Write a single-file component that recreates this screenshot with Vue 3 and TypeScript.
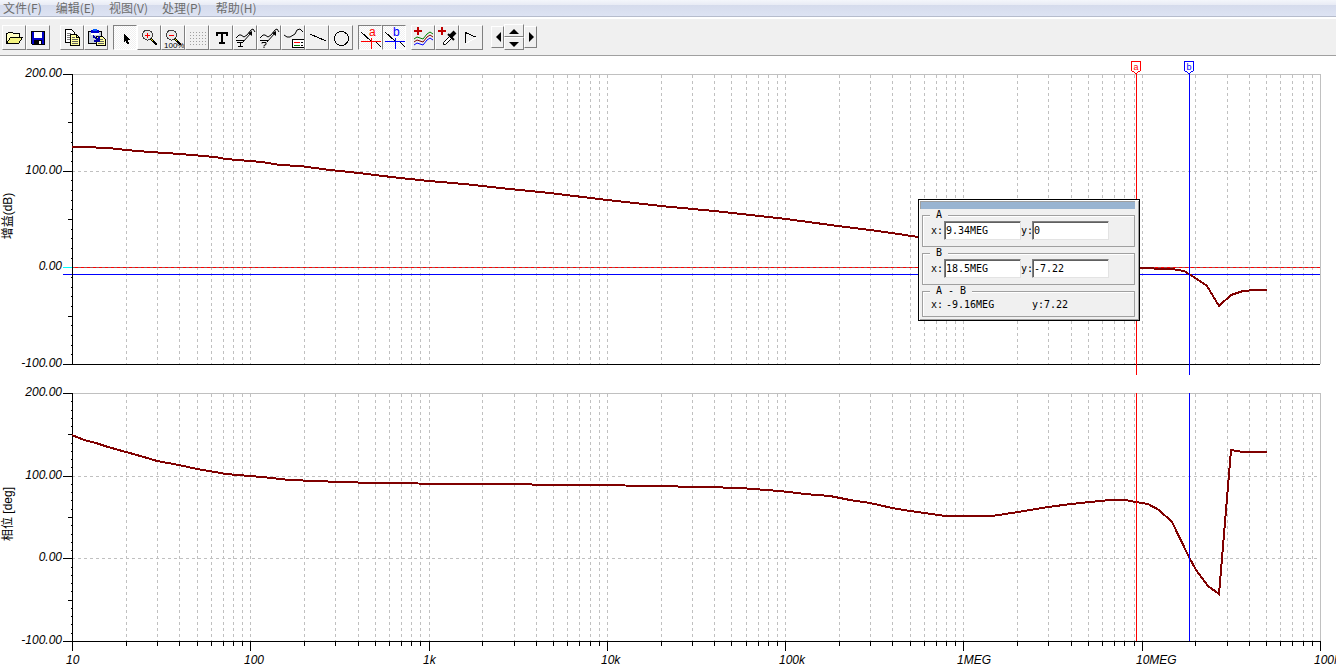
<script setup lang="ts">
import { computed, onBeforeUnmount, onMounted, ref } from 'vue'

type Point = [number, number]

const menus = ['文件(F)', '编辑(E)', '视图(V)', '处理(P)', '帮助(H)']
const toolGroups: { name: string; label: string; pressed?: boolean }[][] = [
  [{ name: 'open', label: '打开' }, { name: 'save', label: '保存' }],
  [{ name: 'copy', label: '复制' }, { name: 'paste', label: '粘贴' }],
  [
    { name: 'pointer', label: '选择', pressed: true },
    { name: 'zoomin', label: '放大' },
    { name: 'zoom100', label: '缩放 100%' },
    { name: 'grid', label: '网格' },
    { name: 'text', label: '文本' },
    { name: 'curvetext', label: '曲线标注' },
    { name: 'curvehelp', label: '曲线查询' },
    { name: 'legend', label: '图例' },
    { name: 'line', label: '直线' },
    { name: 'circle', label: '圆' },
  ],
  [{ name: 'cursora', label: '游标 a', pressed: true }, { name: 'cursorb', label: '游标 b', pressed: true }],
  [{ name: 'addcurve', label: '添加曲线' }, { name: 'probe', label: '探针' }, { name: 'play', label: '处理' }],
]

const gridDots: Point[] = []
for (let y = 7; y <= 19; y += 3) for (let x = 5; x <= 20; x += 3) gridDots.push([x, y])

const chart = ref<HTMLElement | null>(null)
const width = ref(1336)
let observer: ResizeObserver | undefined
onMounted(() => {
  if (!chart.value) return
  width.value = chart.value.clientWidth
  observer = new ResizeObserver(() => {
    if (chart.value) width.value = chart.value.clientWidth
  })
  observer.observe(chart.value)
})
onBeforeUnmount(() => observer?.disconnect())

// Vertical coordinates start at the top of the drawing area (TOP).
const TOP = 56
const LEFT = 72
const DECADES = 7
const BASE = 1248
const right = computed(() => width.value - 16)
const span = computed(() => right.value - LEFT)
const sx = (x: number) => LEFT + ((x - LEFT) * span.value) / BASE
const decadeX = (d: number) => Math.round(LEFT + (span.value * d) / DECADES)

const plots = [
  { top: 74, bottom: 364, title: '增益(dB)', mid: 216 },
  { top: 393, bottom: 641, title: '相位 [deg]', mid: 514 },
]
const yLabels = ['200.00', '100.00', '0.00', '-100.00']
const level = (p: { top: number; bottom: number }, i: number, n: number) =>
  Math.round(p.top + ((p.bottom - p.top) * i) / n)

const xTicks = computed(() => {
  const out: { x: number; major: boolean }[] = []
  for (let d = 0; d < DECADES; d++)
    for (let k = 1; k <= 9; k++) out.push({ x: decadeX(d + Math.log10(k)), major: k === 1 })
  out.push({ x: right.value, major: true })
  return out
})
const xLabels = ['10', '100', '1k', '10k', '100k', '1MEG', '10MEG', '100MEG']

const gain: Point[] = [
  [72, 147], [84, 147], [108, 148], [126, 150], [150, 152], [180, 154], [215, 157], [226, 159], [250, 161],
  [262, 162], [280, 165], [300, 166], [330, 170], [350, 172], [375, 175], [400, 178], [429, 181], [464, 184],
  [500, 188], [550, 193], [607, 200], [661, 206], [714, 211], [786, 219], [838, 226], [870, 230], [892, 233],
  [918, 237], [1000, 252], [1060, 261], [1110, 267], [1142, 268], [1165, 269], [1172, 269], [1184, 271],
  [1189, 274], [1197, 279], [1207, 286], [1219, 306], [1231, 295], [1243, 291], [1255, 290], [1267, 290],
]
const phase: Point[] = [
  [72, 435], [84, 440], [96, 443], [108, 447], [126, 452], [144, 457], [157, 461], [179, 465], [197, 469],
  [215, 472], [226, 474], [250, 476], [262, 477], [290, 480], [340, 482], [375, 483], [460, 484], [600, 485],
  [650, 486], [705, 487], [740, 488], [780, 491], [805, 494], [830, 496], [850, 500], [870, 503], [892, 508],
  [910, 511], [925, 513], [945, 516], [992, 516], [1005, 514], [1018, 512], [1048, 507], [1071, 504],
  [1090, 502], [1110, 500], [1125, 500], [1136, 502], [1148, 504], [1159, 510], [1172, 522], [1189, 557],
  [1196, 570], [1208, 586], [1219, 594], [1231, 450], [1243, 452], [1267, 452],
]
const path = (pts: Point[]) => pts.map(([x, y]) => `${sx(x)},${y}`).join(' ')
const cursors = computed(() => [
  { id: 'a', x: Math.round(sx(1136)), y: 267, color: '#ff0000' },
  { id: 'b', x: Math.round(sx(1189)), y: 274, color: '#0000ff' },
])

const readouts = ref([
  { name: 'A', x: '9.34MEG', y: '0' },
  { name: 'B', x: '18.5MEG', y: '-7.22' },
])
</script>

<template>
  <div class="app">
    <nav class="menu">
      <button v-for="m in menus" :key="m" type="button">{{ m }}</button>
    </nav>
    <div class="toolbar" role="toolbar">
      <div v-for="(group, gi) in toolGroups" :key="gi" class="group">
        <button
          v-for="t in group"
          :key="t.name"
          type="button"
          class="tool"
          :class="{ pressed: t.pressed }"
          :aria-label="t.label"
          :aria-pressed="t.pressed"
        >
          <svg viewBox="0 0 24 24" width="24" height="24" fill="none" stroke="#000" shape-rendering="crispEdges">
            <g v-if="t.name === 'open'">
              <path d="M4.500 18.500V8.500h1l1-1h4l1 1h6v3" fill="#ffffc0" />
              <path d="M4.500 18.500l4-6h12l-4 6z" fill="#f4f480" />
            </g>
            <g v-else-if="t.name === 'save'">
              <path d="M5.500 6.500h13v13h-12l-1-1z" fill="#0000c8" />
              <path d="M8 7h8v6H8z" fill="#fff" stroke="none" />
              <path d="M8 15h8v4H8z" fill="#000" stroke="none" />
              <path d="M13 16h2v3h-2z" fill="#fff" stroke="none" />
            </g>
            <g v-else-if="t.name === 'copy'">
              <path d="M5.500 4.500h6l3 3v10h-9z" fill="#fff" />
              <path d="M7 8.500h4M7 10.500h3M7 12.500h3M7 14.500h3" stroke="#808080" />
              <path d="M10.500 9.500h6l3 3v8h-9z" fill="#ffffa0" />
              <path d="M16.500 9.500v3h3" />
              <path d="M12 12.500h3M12 14.500h6M12 16.500h6M12 18.500h6" stroke="#606060" />
            </g>
            <g v-else-if="t.name === 'paste'">
              <path d="M4.500 6.500h13v12h-13z" fill="#c8d0dc" />
              <path d="M7 5h8v3H7z" fill="#0000d0" stroke="none" />
              <path d="M9.500 4.500h3v1h-3z" fill="#0080ff" stroke="#0060ff" />
              <path d="M7 8h8v2H7z" fill="#fff" stroke="none" />
              <path d="M12.500 11.500h6l3 3v6h-9z" fill="#ffffa0" />
              <path d="M15 14.500h4M14 16.500h6M14 18.500h6" stroke="#606060" />
              <path d="M9 11l5 4M15 11v5h-5" stroke="#0000a0" stroke-width="2" />
            </g>
            <path v-else-if="t.name === 'pointer'" d="M11 8v9l2-1 1 3h2l-1-4h2z" fill="#000" stroke="none" />
            <g v-else-if="t.name === 'zoomin' || t.name === 'zoom100'">
              <circle cx="10.500" cy="10" r="5" fill="#e8e8e8" stroke="#404040" />
              <path d="M8 10.500h5" stroke="#f00" />
              <path v-if="t.name === 'zoomin'" d="M10.500 8v5" stroke="#f00" />
              <path d="M14 14l6 6" stroke-width="2" />
              <path d="M14 14l2 2" stroke="#dddd00" />
              <text v-if="t.name === 'zoom100'" x="3" y="23" class="small">100%</text>
            </g>
            <g v-else-if="t.name === 'grid'" stroke="none" fill="#a0a0a0">
              <rect v-for="(d, i) in gridDots" :key="i" :x="d[0]" :y="d[1]" width="1" height="1" />
            </g>
            <path
              v-else-if="t.name === 'text'"
              d="M7 7h12v4h-2V9h-3v8h2v2h-6v-2h2V9H9v2H7z"
              fill="#000"
              stroke="none"
            />
            <g v-else-if="t.name === 'curvetext' || t.name === 'curvehelp'" shape-rendering="auto">
              <path d="M3 13l3-3h2l3 2 3-2 4-5 2-1 2 3M10 17l8-9" />
              <path d="M15 8l4-2v5z" fill="#000" stroke="none" />
              <path d="M3 15.500h8M10.500 15v2" />
              <path v-if="t.name === 'curvetext'" d="M4 17.500h6M7.500 17v5M5 21.500h5" />
              <path v-else d="M5 18.500v-1h4v2l-2 1v1M7 22v1" />
            </g>
            <g v-else-if="t.name === 'legend'">
              <path d="M3 10l3 2h3l5-3 2-4 3-1 3 3" shape-rendering="auto" />
              <path d="M11.500 14.500h12v8h-12z" fill="#fff" />
              <path d="M13 17.500h6" stroke="#f00" />
              <path d="M13 20.500h6" stroke="#008000" />
              <path d="M20 17.500h2M20 20.500h2" />
            </g>
            <path v-else-if="t.name === 'line'" d="M5 9l16 7" />
            <circle v-else-if="t.name === 'circle'" cx="12.500" cy="13.500" r="7" />
            <g v-else-if="t.name === 'cursora' || t.name === 'cursorb'">
              <path d="M3 7l10 9h4l6 6" />
              <path d="M3 16.500h20M13.500 13v11" :stroke="t.name === 'cursora' ? '#f00' : '#00f'" />
              <text x="11" y="11" class="mark" :class="t.name">{{ t.name === 'cursora' ? 'a' : 'b' }}</text>
            </g>
            <g v-else-if="t.name === 'addcurve'">
              <path d="M3 6h8M7 2v8" stroke="#c00000" stroke-width="2" />
              <g shape-rendering="auto">
                <path d="M3 14l3-2 3 1 3 1 4-5 3-2 3 2" stroke="#008000" />
                <path d="M3 17l3-2 3 1 3 1 4-5 3-2 3 2" stroke="#800000" />
                <path d="M3 20l3-2 3 1 3 1 4-5 3-2 3 2" stroke="#00f" />
              </g>
            </g>
            <g v-else-if="t.name === 'probe'">
              <path d="M3 6h8M7 2v8" stroke="#c00000" stroke-width="2" />
              <g shape-rendering="auto">
                <path d="M8.500 19.500v-2l6-6 2 2-6 6z" fill="#fff" />
                <path d="M13 9l6 6" stroke-width="2" />
                <path d="M15 12l5-5" stroke-width="4" />
              </g>
            </g>
            <g v-else>
              <path d="M6.500 18V7.500l11 5" />
              <path d="M17.500 12.500L7 18.500" stroke="#fff" />
            </g>
          </svg>
        </button>
      </div>
      <div class="group scroll">
        <button type="button" class="side" aria-label="左">
          <svg viewBox="0 0 10 18" width="10" height="18"><path d="M3 9l5-5v10z" /></svg>
        </button>
        <div class="stack">
          <button type="button" aria-label="上">
            <svg viewBox="0 0 16 10" width="16" height="10"><path d="M3 8l5-5 5 5z" /></svg>
          </button>
          <button type="button" aria-label="下">
            <svg viewBox="0 0 16 10" width="16" height="10"><path d="M3 3l5 5 5-5z" /></svg>
          </button>
        </div>
        <button type="button" class="side" aria-label="右">
          <svg viewBox="0 0 10 18" width="10" height="18"><path d="M3 4l5 5-5 5z" /></svg>
        </button>
      </div>
    </div>

    <main ref="chart" class="chart">
      <svg class="plot" :viewBox="`0 ${TOP} ${width} 615`" :width="width" height="615" shape-rendering="crispEdges">
        <g v-for="(p, pi) in plots" :key="p.title">
          <g class="grid">
            <rect :x="LEFT" :y="p.top" :width="span" height="1" class="edge" />
            <rect :x="right" :y="p.top" width="1" :height="p.bottom - p.top" class="edge" />
            <line
              v-for="t in xTicks.slice(1, -1)"
              :key="t.x"
              :x1="t.x + 0.5"
              :x2="t.x + 0.5"
              :y1="p.top + 1"
              :y2="p.bottom"
            />
            <line
              v-for="i in 2"
              :key="i"
              :x1="LEFT"
              :x2="right"
              :y1="level(p, i, 3) + 0.5"
              :y2="level(p, i, 3) + 0.5"
            />
          </g>
          <rect :x="LEFT" :y="p.top" width="1" :height="p.bottom - p.top" />
          <rect :x="LEFT - 9" :y="p.bottom" :width="span + 9" height="1" />
          <rect v-for="i in 29" :key="i" :x="LEFT - 1" :y="level(p, i, 30)" width="1" height="1" />
          <rect v-for="i in [5, 15, 25]" :key="i" :x="LEFT - 4" :y="level(p, i, 30)" width="4" height="1" />
          <template v-for="(label, i) in yLabels" :key="label">
            <rect :x="LEFT - 9" :y="level(p, i, 3)" width="9" height="1" />
            <text x="62" :y="level(p, i, 3) + 3" class="value end">{{ label }}</text>
          </template>
          <text class="title" :transform="`translate(12 ${p.mid}) rotate(-90)`">{{ p.title }}</text>
          <template v-if="pi === 0">
            <rect v-for="c in cursors" :key="c.id" x="63" :y="c.y" :width="right - 63" height="1" :fill="c.color" />
            <line :x1="LEFT" :x2="right" y1="267.500" y2="267.500" class="zero" />
            <rect x="63" y="267" width="9" height="1" fill="#00ffff" />
            <rect :x="LEFT" y="267" width="1" height="8" />
          </template>
          <polyline :points="path(pi === 0 ? gain : phase)" class="curve" />
          <rect
            v-for="c in cursors"
            :key="c.id"
            :x="c.x"
            :y="pi === 0 ? 73 : p.top"
            width="1"
            :height="pi === 0 ? 302 : p.bottom - p.top"
            :fill="c.color"
          />
        </g>
        <g v-for="c in cursors" :key="c.id">
          <path
            :d="`M${c.x - 4.5} 61.500h9v9l-4.500 3l-4.500 -3z`"
            fill="#fff"
            :stroke="c.color"
          />
          <text :x="c.x" y="70" class="flag" :fill="c.color">{{ c.id }}</text>
        </g>
        <rect v-for="t in xTicks" :key="t.x" :x="t.x" y="641" width="1" :height="t.major ? 10 : 5" />
        <text v-for="(label, i) in xLabels" :key="label" :x="decadeX(i) - 6" y="664" class="value">{{ label }}</text>
      </svg>

      <form class="readout" aria-label="游标" @submit.prevent>
        <div class="bar"></div>
        <fieldset v-for="r in readouts" :key="r.name">
          <legend>{{ r.name }}</legend>
          <div class="row">
            <label class="lx" :for="`x${r.name}`">x:</label>
            <input :id="`x${r.name}`" v-model="r.x" type="text" />
            <label class="ly" :for="`y${r.name}`">y:</label>
            <input :id="`y${r.name}`" v-model="r.y" type="text" />
          </div>
        </fieldset>
        <fieldset class="diff">
          <legend>A - B</legend>
          <div class="row">
            <span class="lx">x:</span>
            <output>-9.16MEG</output>
            <span>y:7.22</span>
          </div>
        </fieldset>
      </form>
    </main>
  </div>
</template>

<style>
body {
  margin: 0;
  background: #fff;
}
</style>

<style scoped>
.app {
  min-height: 100vh;
  display: flex;
  flex-direction: column;
  overflow: hidden;
  font-family: "Liberation Sans", "Noto Sans CJK SC", sans-serif;
  font-size: 12px;
  color: #000;
}
button {
  margin: 0;
  padding: 0;
  border: 0;
  background: none;
  font: inherit;
  color: inherit;
}
.menu {
  box-sizing: border-box;
  display: flex;
  gap: 14px;
  height: 17px;
  padding-left: 3px;
  background: linear-gradient(#f4f6fb 0, #e8ebf5 5px, #d5dbec 5px, #dde3f3 16px);
  border-bottom: 1px solid #b6bccc;
  color: #6d6d6d;
  font-family: "Noto Sans CJK SC", sans-serif;
  line-height: 16px;
}
.toolbar {
  box-sizing: border-box;
  display: flex;
  align-items: center;
  gap: 5px;
  height: 39px;
  padding: 0 2px;
  background: #f0f0f0;
  border-top: 2px solid #fff;
  border-bottom: 1px solid #a0a0a0;
}
.group {
  display: flex;
}
.group:first-child {
  margin-right: 5px;
}
.tool,
.side,
.stack button {
  box-sizing: border-box;
  background: #f0f0f0;
  border: 1px solid;
  border-color: #fff #808080 #808080 #fff;
}
.tool {
  width: 24px;
  height: 25px;
  overflow: hidden;
}
.tool svg {
  display: block;
  margin: -1px;
}
.tool.pressed {
  background: repeating-conic-gradient(#fff 0 25%, #f0f0f0 0 50%) 0 0 / 2px 2px;
  border-color: #808080 #fff #fff #808080;
}
.scroll {
  align-items: center;
  margin-left: 3px;
}
.scroll svg {
  flex: none;
}
.side {
  width: 13px;
  height: 22px;
  display: flex;
  align-items: center;
  justify-content: center;
}
.stack {
  display: flex;
  flex-direction: column;
}
.stack button {
  width: 20px;
  height: 13px;
  display: flex;
  align-items: center;
  justify-content: center;
}
.small {
  font: 8px "Liberation Sans", sans-serif;
  fill: #000;
  stroke: none;
}
.mark {
  font: 12px "Liberation Sans", sans-serif;
  stroke: none;
}
.cursora {
  fill: #f00;
}
.cursorb {
  fill: #00f;
}
.chart {
  position: relative;
  flex: 1;
}
.plot {
  display: block;
}
.grid line {
  stroke: #c0c0c0;
  stroke-dasharray: 3 3;
}
.edge {
  fill: #c0c0c0;
}
.zero {
  stroke: #a05050;
  stroke-dasharray: 3 3;
}
.curve {
  fill: none;
  stroke: #800000;
  stroke-width: 2;
}
.value {
  font: italic 12px "Liberation Sans", sans-serif;
}
.end {
  text-anchor: end;
}
.title {
  font: 12px "Liberation Sans", "Noto Sans CJK SC", sans-serif;
  text-anchor: middle;
}
.flag {
  font: 9px "Liberation Sans", sans-serif;
  text-anchor: middle;
}
.readout {
  position: absolute;
  top: 143px;
  right: 196px;
  box-sizing: border-box;
  width: 222px;
  padding: 1px 4px 3px 3px;
  border: 1px solid #000;
  background: #f0f0f0;
  box-shadow: inset 1px 1px #fff, inset -1px -1px #a0a0a0;
  font: 10px/12px "DejaVu Sans Mono", monospace;
}
.bar {
  box-sizing: border-box;
  height: 8px;
  margin: 0 0 0 -2px;
  background: #99b4d1;
  border: solid #a0a0a0;
  border-width: 1px 0 0 1px;
}
fieldset {
  box-sizing: border-box;
  height: 38px;
  min-width: 0;
  margin: 0;
  padding: 0 0 0 7px;
  border: 1px solid #a0a0a0;
  box-shadow: inset 1px 1px #fff;
}
.diff {
  height: 32px;
}
.diff .row {
  padding-top: 2px;
}
legend {
  padding: 0 6px;
  background: #f0f0f0;
}
.row {
  display: flex;
  align-items: center;
}
.lx {
  box-sizing: border-box;
  width: 14px;
  padding-left: 1px;
}
.ly {
  width: 11px;
}
output {
  width: 88px;
  padding-left: 2px;
  box-sizing: border-box;
}
input {
  box-sizing: border-box;
  width: 77px;
  height: 19px;
  margin: 0;
  padding: 0 1px;
  border: 1px solid;
  border-color: #808080 #e3e3e3 #e3e3e3 #808080;
  border-radius: 0;
  box-shadow: inset 1px 1px #606060;
  background: #fff;
  color: #000;
  font: inherit;
}
</style>
